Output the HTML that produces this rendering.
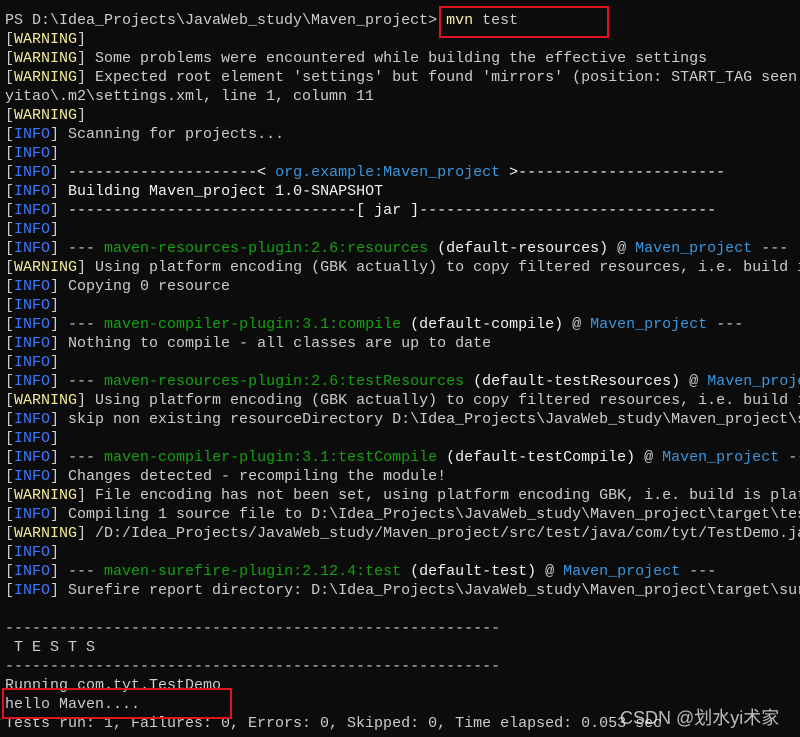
<!DOCTYPE html>
<html><head><meta charset="utf-8"><style>
html,body{margin:0;padding:0;background:#0c0c0c;}
body{width:800px;height:737px;overflow:hidden;position:relative;}
pre{margin:0;padding:11px 0 0 5px;font-family:"Liberation Mono",monospace;font-size:15px;line-height:19px;color:#cccccc;white-space:pre;overflow:hidden;width:795px;height:726px;}
.w{color:#f2eb9a}.i{color:#3b78ff}.g{color:#13a10e}.p{color:#3a96dd}.b{color:#f2f2f2}.y{color:#f9f1a5}
.box{position:absolute;border:2px solid #e0141e;}
.wm{position:absolute;left:620px;top:704px;font-family:"Liberation Sans","Noto Sans CJK SC",sans-serif;font-size:18px;color:rgba(230,230,230,0.8);}
</style></head><body>
<pre>PS D:\Idea_Projects\JavaWeb_study\Maven_project&gt; <span class="y">mvn</span> test
[<span class="w">WARNING</span>]
[<span class="w">WARNING</span>] Some problems were encountered while building the effective settings
[<span class="w">WARNING</span>] Expected root element 'settings' but found 'mirrors' (position: START_TAG seen
yitao\.m2\settings.xml, line 1, column 11
[<span class="w">WARNING</span>]
[<span class="i">INFO</span>] Scanning for projects...
[<span class="i">INFO</span>]
[<span class="i">INFO</span>] <span class="b">---------------------&lt; </span><span class="p">org.example:Maven_project</span><span class="b"> &gt;-----------------------</span>
[<span class="i">INFO</span>] <span class="b">Building Maven_project 1.0-SNAPSHOT</span>
[<span class="i">INFO</span>] <span class="b">--------------------------------[ jar ]---------------------------------</span>
[<span class="i">INFO</span>]
[<span class="i">INFO</span>] --- <span class="g">maven-resources-plugin:2.6:resources</span> <span class="b">(default-resources)</span> @ <span class="p">Maven_project</span> ---
[<span class="w">WARNING</span>] Using platform encoding (GBK actually) to copy filtered resources, i.e. build is
[<span class="i">INFO</span>] Copying 0 resource
[<span class="i">INFO</span>]
[<span class="i">INFO</span>] --- <span class="g">maven-compiler-plugin:3.1:compile</span> <span class="b">(default-compile)</span> @ <span class="p">Maven_project</span> ---
[<span class="i">INFO</span>] Nothing to compile - all classes are up to date
[<span class="i">INFO</span>]
[<span class="i">INFO</span>] --- <span class="g">maven-resources-plugin:2.6:testResources</span> <span class="b">(default-testResources)</span> @ <span class="p">Maven_project</span> ---
[<span class="w">WARNING</span>] Using platform encoding (GBK actually) to copy filtered resources, i.e. build is
[<span class="i">INFO</span>] skip non existing resourceDirectory D:\Idea_Projects\JavaWeb_study\Maven_project\src
[<span class="i">INFO</span>]
[<span class="i">INFO</span>] --- <span class="g">maven-compiler-plugin:3.1:testCompile</span> <span class="b">(default-testCompile)</span> @ <span class="p">Maven_project</span> ---
[<span class="i">INFO</span>] Changes detected - recompiling the module!
[<span class="w">WARNING</span>] File encoding has not been set, using platform encoding GBK, i.e. build is platform
[<span class="i">INFO</span>] Compiling 1 source file to D:\Idea_Projects\JavaWeb_study\Maven_project\target\test
[<span class="w">WARNING</span>] /D:/Idea_Projects/JavaWeb_study/Maven_project/src/test/java/com/tyt/TestDemo.java
[<span class="i">INFO</span>]
[<span class="i">INFO</span>] --- <span class="g">maven-surefire-plugin:2.12.4:test</span> <span class="b">(default-test)</span> @ <span class="p">Maven_project</span> ---
[<span class="i">INFO</span>] Surefire report directory: D:\Idea_Projects\JavaWeb_study\Maven_project\target\surefire

-------------------------------------------------------
 T E S T S
-------------------------------------------------------
Running com.tyt.TestDemo
hello Maven....
Tests run: 1, Failures: 0, Errors: 0, Skipped: 0, Time elapsed: 0.053 sec</pre>
<div class="box" style="left:439px;top:6px;width:166px;height:28px;"></div>
<div class="box" style="left:2px;top:688px;width:226px;height:27px;"></div>
<div class="wm">CSDN @划水yi术家</div>
</body></html>
